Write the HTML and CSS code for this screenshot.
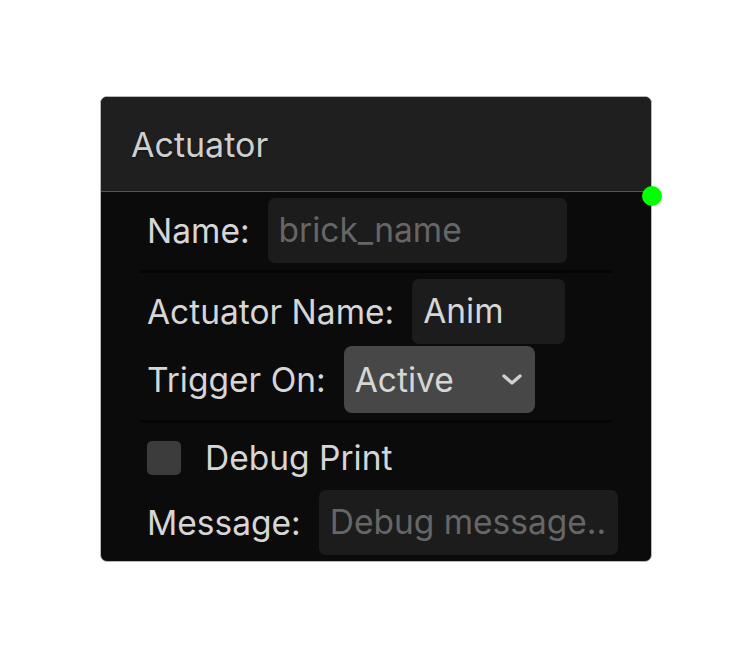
FILE: index.html
```html
<!DOCTYPE html>
<html>
<head>
<link rel="stylesheet" href="styles.css">
</head>
<body>

<!-- Logic brick node -->
<div class="node">
  <div class="node-header">Actuator</div>
  <span class="socket"></span>

  <div class="node-body">
    <div class="section">
      <div class="row">
        <span class="label">Name:</span>
        <input class="field name-field" type="text" placeholder="brick_name">
      </div>
    </div>

    <div class="section">
      <div class="row">
        <span class="label">Actuator Name:</span>
        <input class="field short-field" type="text" value="Anim">
      </div>
      <div class="row">
        <span class="label">Trigger On:</span>
        <div class="select">
          <span>Active</span>
          <svg width="22" height="14" viewBox="0 0 22 14"><path d="M3 3 L11 10 L19 3" fill="none" stroke="#cfcfcf" stroke-width="3.4" stroke-linecap="round" stroke-linejoin="round"/></svg>
        </div>
      </div>
    </div>

    <div class="section last">
      <div class="row check-row">
        <span class="checkbox"></span>
        <span class="label">Debug Print</span>
      </div>
      <div class="row">
        <span class="label">Message:</span>
        <input class="field msg-field" type="text" placeholder="Debug message..">
      </div>
    </div>
  </div>
</div>

</body>
</html>
```

FILE: styles.css
```css
body {
  margin: 0;
  background-color: #fff;
  font-family: Inter, "Noto Sans", sans-serif;
}

.node {
  position: relative;
  margin: 96px 0 0 100px;
  width: 550px;
  background-color: #0b0b0b;
  border: 1px solid #b8b8b8;
  border-radius: 7px;
}

.node-header {
  height: 94px;
  display: flex;
  align-items: center;
  padding-left: 30px;
  font-size: 34px;
  color: #cfcfcf;
  text-shadow: 0 1px 2px rgba(0,0,0,0.6);
  background-color: #1f1f1f;
  border-bottom: 1px solid #555;
  border-radius: 6px 6px 0 0;
}

/* Green output socket on the right edge */
.socket {
  position: absolute;
  top: 89px;
  right: -11px;
  width: 20px;
  height: 20px;
  border-radius: 50%;
  background-color: #00ff00;
}

.node-body {
  padding: 0 39px;
}

.section {
  display: flex;
  flex-direction: column;
  gap: 2px;
  padding: 6px 7px 7px;
  border-bottom: 3px solid #050505;
}

.section.last {
  border-bottom: none;
  padding-top: 15px;
  padding-bottom: 6px;
  gap: 12px;
}

.row {
  display: flex;
  align-items: center;
  gap: 18px;
  line-height: 40px;
}

.label {
  font-size: 33.5px;
  color: #d6d6d6;
  white-space: nowrap;
}

.field {
  height: 65px;
  box-sizing: border-box;
  padding: 0 11px 2px;
  border: none;
  border-radius: 7px;
  background-color: #1c1c1c;
  color: #d6d6d6;
  font-family: Inter, "Noto Sans", sans-serif;
  font-size: 33.5px;
  outline: none;
}

.field::placeholder {
  color: #666;
}

.name-field {
  width: 299px;
}

.short-field {
  width: 153px;
}

.msg-field {
  width: 299px;
}

.select {
  display: flex;
  align-items: center;
  justify-content: space-between;
  width: 191px;
  height: 67px;
  box-sizing: border-box;
  padding: 0 12px 0 11px;
  border-radius: 8px;
  background-color: #474747;
  font-size: 33.5px;
  color: #d6d6d6;
}

.check-row {
  gap: 24px;
}

.checkbox {
  width: 34px;
  height: 34px;
  border-radius: 5px;
  background-color: #3c3c3c;
}
```
